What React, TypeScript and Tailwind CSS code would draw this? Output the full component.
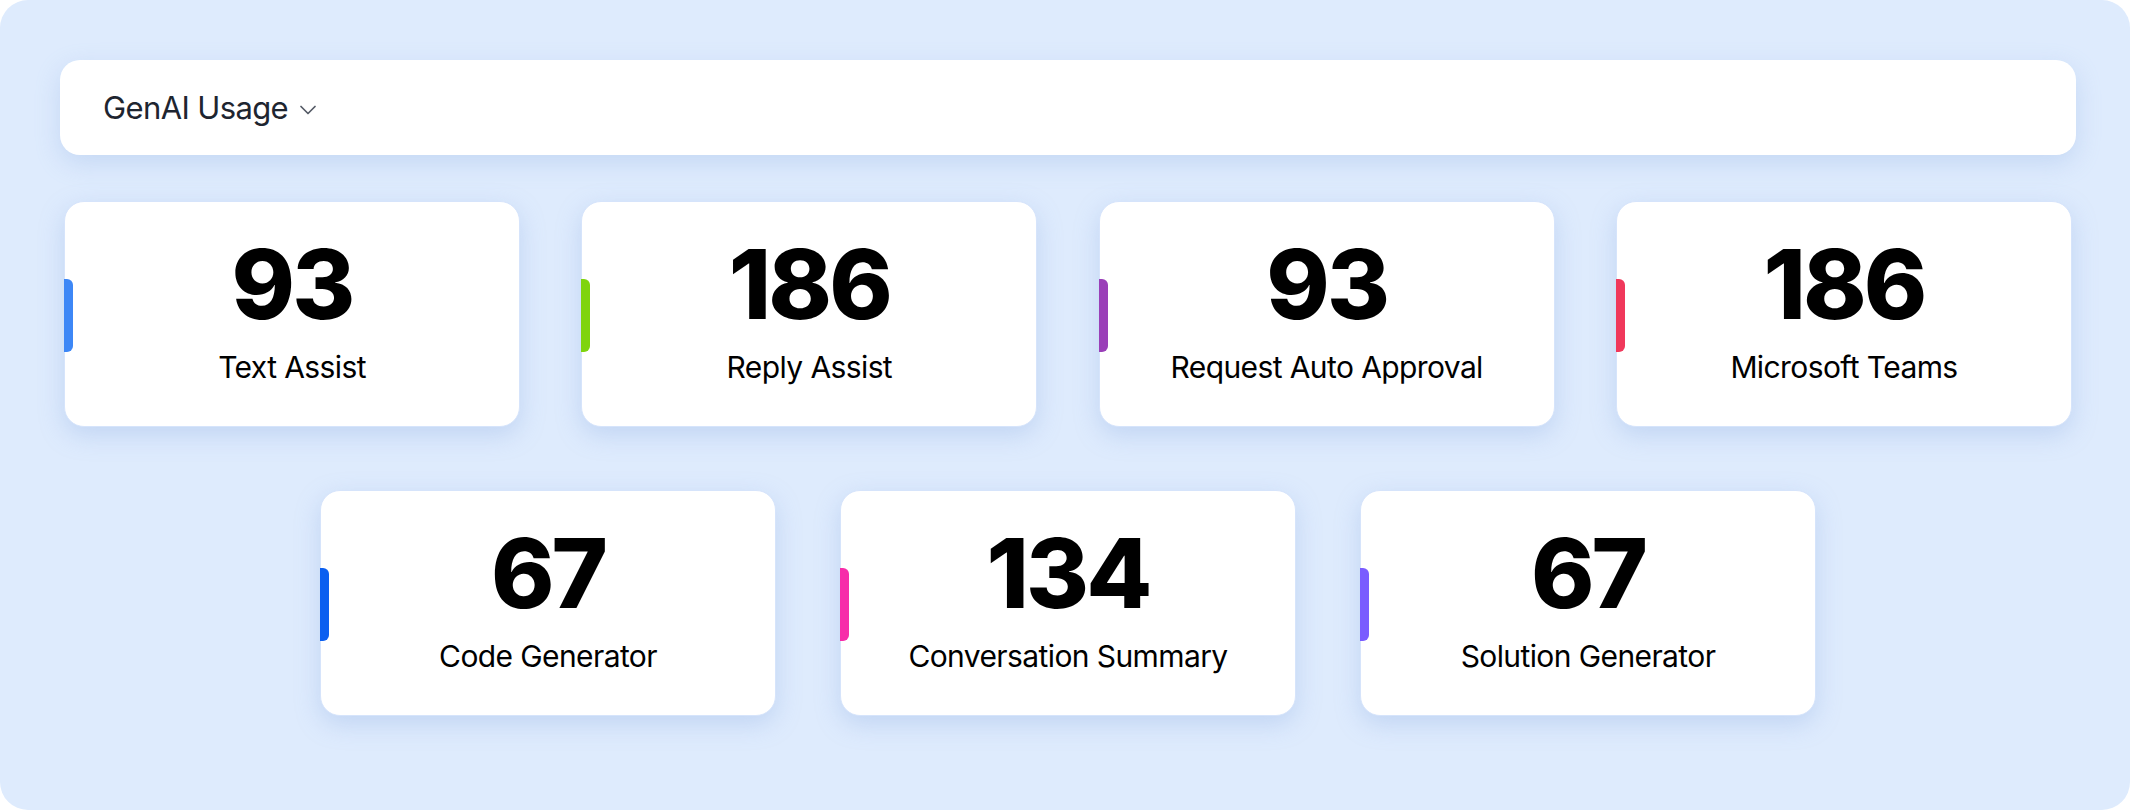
import { ChevronDown } from "lucide-react";

type Stat = { value: number; label: string; tab: string };

const topRow: Stat[] = [
  { value: 93, label: "Text Assist", tab: "bg-[#3d87f6]" },
  { value: 186, label: "Reply Assist", tab: "bg-[#7fd40e]" },
  { value: 93, label: "Request Auto Approval", tab: "bg-[#9a3fb8]" },
  { value: 186, label: "Microsoft Teams", tab: "bg-[#f0385b]" },
];

const bottomRow: Stat[] = [
  { value: 67, label: "Code Generator", tab: "bg-[#0b5ff0]" },
  { value: 134, label: "Conversation Summary", tab: "bg-[#f72ca9]" },
  { value: 67, label: "Solution Generator", tab: "bg-[#7a5cff]" },
];

function StatCard({ value, label, tab }: Stat) {
  return (
    <div className="relative flex h-[226px] w-[456px] shrink-0 flex-col items-center rounded-[20px] border border-[#d6e4fb] bg-white pt-[34px] shadow-[0_8px_24px_rgba(140,172,225,0.35)]">
      {/* coloured marker on the left edge */}
      <span className={`absolute left-[-1px] top-[77px] h-[73px] w-[9px] rounded-r-[6px] ${tab}`} />
      <div className="text-[96px] font-extrabold leading-none tracking-[-0.03em] text-black">
        {value}
      </div>
      <div className="mt-[20px] text-[30px] leading-none tracking-[-0.02em] text-black">
        {label}
      </div>
    </div>
  );
}

export default function App() {
  return (
    <div className="h-[810px] w-full bg-white font-['Inter',sans-serif]">
      <div className="flex h-full w-full flex-col rounded-[28px] bg-[#deebfd] pl-[60px] pr-[54px] pt-[60px]">
        <div className="flex h-[95px] items-center rounded-[20px] bg-white pl-[43px] shadow-[0_8px_24px_rgba(140,172,225,0.3)]">
          <span className="text-[31px] leading-none tracking-[-0.02em] text-[#1e2530]">
            GenAI Usage
          </span>
          <ChevronDown className="ml-[6px] mt-[4px] h-[28px] w-[28px] text-[#555b66]" strokeWidth={1.5} />
        </div>

        <div className="mt-[46px] flex justify-between px-[4px]">
          {topRow.map((s) => (
            <StatCard key={s.label} {...s} />
          ))}
        </div>

        <div className="mt-[63px] flex justify-center gap-[64px] px-[4px]">
          {bottomRow.map((s) => (
            <StatCard key={s.label} {...s} />
          ))}
        </div>
      </div>
    </div>
  );
}
